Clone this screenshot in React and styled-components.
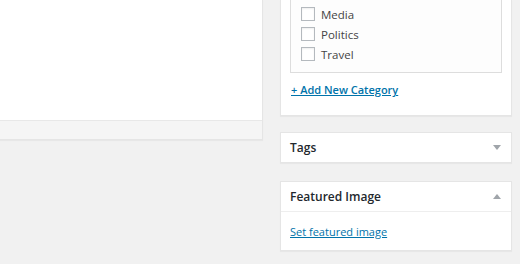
import React from "react";
import styled, { createGlobalStyle } from "styled-components";

const GlobalStyle = createGlobalStyle`
  html, body {
    margin: 0;
    padding: 0;
    background: #f1f1f1;
    font-family: "Open Sans", "Liberation Sans", sans-serif;
    color: #444;
    overflow: hidden;
  }
`;

const Page = styled.div`
  display: flex;
  align-items: flex-start;
  gap: 17px;
  width: 520px;
  height: 264px;
  overflow: hidden;
`;

const EditorPanel = styled.div`
  width: 262px;
  background: #fff;
  border: 1px solid #e5e5e5;
  border-left: none;
  border-top: none;
  box-shadow: 0 1px 1px rgba(0, 0, 0, 0.04);
`;

const EditorBody = styled.div`
  height: 120px;
`;

const EditorFooter = styled.div`
  height: 18px;
  background: #f5f5f5;
  border-top: 1px solid #e8e8e8;
`;

const Sidebar = styled.div`
  width: 232px;
  display: flex;
  flex-direction: column;
`;

const Box = styled.div`
  background: #fff;
  border: 1px solid #e5e5e5;
  border-top: ${(p) => (p.clipped ? "none" : "1px solid #e5e5e5")};
  box-shadow: 0 1px 1px rgba(0, 0, 0, 0.04);
  margin-bottom: ${(p) => p.gap || 18}px;
`;

const BoxInside = styled.div`
  padding: 0 9px 16px;
`;

const CategoryList = styled.ul`
  list-style: none;
  margin: 0;
  padding: 4px 0 8px 10px;
  background: #fdfdfd;
  border: 1px solid #dddddd;
  border-top: none;
`;

const CategoryItem = styled.li`
  display: flex;
  align-items: center;
  height: 20px;
  font-size: 11.5px;
  color: #444;
`;

const Checkbox = styled.span`
  box-sizing: border-box;
  width: 14px;
  height: 14px;
  margin-right: 6px;
  border: 1px solid #b4b9be;
  background: #fff;
  box-shadow: inset 0 1px 2px rgba(0, 0, 0, 0.07);
`;

const Link = styled.a`
  display: inline-block;
  color: #0073aa;
  text-decoration: underline;
  font-size: 11px;
  line-height: 18px;
  cursor: pointer;
  font-weight: ${(p) => (p.bold ? 600 : 400)};
`;

const AddLink = styled.div`
  padding: 6px 0 0 1px;
  line-height: 18px;
`;

const BoxHeader = styled.div`
  display: flex;
  align-items: center;
  justify-content: space-between;
  height: 29px;
  padding: 0 10px 0 9px;
  border-bottom: ${(p) => (p.open ? "1px solid #eeeeee" : "none")};
`;

const BoxTitle = styled.h2`
  margin: 0;
  font-size: 12px;
  font-weight: 600;
  color: #23282d;
`;

const Toggle = styled.span`
  width: 0;
  height: 0;
  border-left: 4px solid transparent;
  border-right: 4px solid transparent;
  border-top: ${(p) => (p.up ? "none" : "5px solid #a0a5aa")};
  border-bottom: ${(p) => (p.up ? "5px solid #a0a5aa" : "none")};
`;

const FeaturedInside = styled.div`
  padding: 9px 9px;
  line-height: 18px;
`;

const categories = ["Media", "Politics", "Travel"];

const App = () => {
  return (
    <>
      <GlobalStyle />
      <Page>
        <EditorPanel>
          <EditorBody />
          <EditorFooter />
        </EditorPanel>
        <Sidebar>
          <Box clipped gap={16}>
            <BoxInside>
              <CategoryList>
                {categories.map((c) => (
                  <CategoryItem key={c}>
                    <Checkbox />
                    {c}
                  </CategoryItem>
                ))}
              </CategoryList>
              <AddLink>
                <Link bold>+ Add New Category</Link>
              </AddLink>
            </BoxInside>
          </Box>
          <Box gap={18}>
            <BoxHeader>
              <BoxTitle>Tags</BoxTitle>
              <Toggle />
            </BoxHeader>
          </Box>
          <Box>
            <BoxHeader open>
              <BoxTitle>Featured Image</BoxTitle>
              <Toggle up />
            </BoxHeader>
            <FeaturedInside>
              <Link>Set featured image</Link>
            </FeaturedInside>
          </Box>
        </Sidebar>
      </Page>
    </>
  );
};

export default App;
